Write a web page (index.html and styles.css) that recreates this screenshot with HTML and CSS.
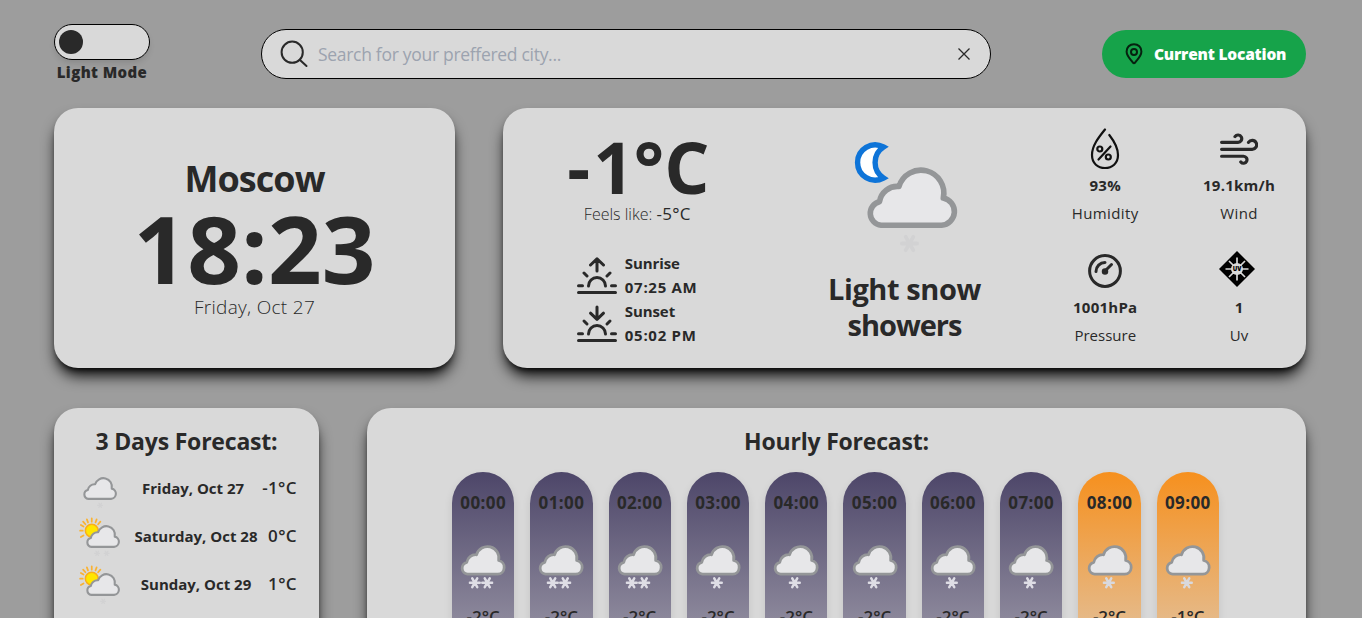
FILE: index.html
```
<!DOCTYPE html>
<html lang="en">
<head>
<meta charset="utf-8">
<title>Weather</title>
<link rel="stylesheet" href="styles.css">
</head>
<body>
<svg class="defs" aria-hidden="true">
  <defs>
    <symbol id="cloud" viewBox="0 0 128 128">
      <path d="M41 98.3A12 12 0 0 1 39.5 74.7A18 18 0 0 1 59 59.5A22.9 22.9 0 0 1 103.3 71A13.8 13.8 0 0 1 101.5 98.3Z" stroke-width="5.6" stroke-linejoin="round"/>
    </symbol>
    <symbol id="flake" viewBox="0 0 20 20">
      <path d="M2 10H18M6 3L14 17M14 3L6 17" fill="none" stroke="currentColor" stroke-width="4" stroke-linecap="round"/>
    </symbol>
    <symbol id="sun" viewBox="0 0 128 128">
      <circle cx="42" cy="55" r="17" fill="#ffe600" stroke="#f9ae1c" stroke-width="4"/>
      <path d="M42 31V22M25 38L19 31M18 55H11M20 68L13 72M59 38L65 31M32 33L29 25M52 33L55 25M20 44L13 40" stroke="#f9b233" stroke-width="4.6" stroke-linecap="round"/>
    </symbol>
    <symbol id="w-two" viewBox="0 0 128 128"><use href="#cloud"/><use href="#flake" x="43" y="103" width="25" height="25"/><use href="#flake" x="68" y="103" width="25" height="25"/></symbol>
    <symbol id="w-one" viewBox="0 0 128 128"><use href="#cloud"/><use href="#flake" x="57" y="103" width="25" height="25"/></symbol>
  </defs>
</svg>
<div class="page">
  <header class="header">
    <div class="mode"><div class="toggle"><span class="knob"></span></div><span class="mode-label">Light Mode</span></div>
    <div class="search">
      <svg class="i-search" viewBox="0 0 32 32"><circle cx="14.200" cy="14.200" r="10.600"/><path d="M21.700 21.700L28.500 28"/></svg>
      <span class="placeholder">Search for your preffered city...</span>
      <svg class="i-close" viewBox="0 0 12 12"><path d="M.5 .5L11.500 11.500M11.500 .5L.5 11.500"/></svg>
    </div>
    <div class="locate">
      <svg class="i-pin" viewBox="0 0 18 22"><path d="M9 1.200C4.700 1.200 1.600 4.400 1.600 8.500C1.600 13.500 6.200 16.800 8 19.700Q9 20.700 10 19.700C11.800 16.800 16.400 13.500 16.400 8.500C16.400 4.400 13.300 1.200 9 1.200Z"/><circle cx="9" cy="9" r="3"/></svg>
      <span>Current Location</span>
    </div>
  </header>

  <div class="row top">
    <section class="card clock">
      <h1 class="city">Moscow</h1>
      <div class="time">18:23</div>
      <div class="date">Friday, Oct 27</div>
    </section>
    <section class="card now">
      <div class="now-col temp-col">
        <div class="temp"><span class="minus">-</span>1°C</div>
        <div class="feels">Feels like: <span class="feels-v">-5°C</span></div>
        <div class="sun-row">
          <svg class="i-sun" viewBox="0 0 40 38"><path d="M1.500 35.500H38.500M1.500 28.800H5.500M34.500 28.800H38.500M7 16L10 19M33 16L30 19M11.500 29A8.500 8.500 0 0 1 28.500 29M20 14V1.800M13.500 8L20 1.800L26.500 8"/></svg>
          <div class="sun-text"><span>Sunrise</span><span class="clock-t">07:25 AM</span></div>
        </div>
        <div class="sun-row">
          <svg class="i-sun" viewBox="0 0 40 38"><path d="M1.500 35.500H38.500M1.500 28.800H5.500M34.500 28.800H38.500M7 16L10 19M33 16L30 19M11.500 29A8.500 8.500 0 0 1 28.500 29M20 2V14M13.500 8.200L20 14.400L26.500 8.200"/></svg>
          <div class="sun-text"><span>Sunset</span><span class="clock-t">05:02 PM</span></div>
        </div>
      </div>
      <div class="now-col cond-col">
        <svg class="cond-icon" viewBox="0 0 128 128">
          <path d="M43.500 20A17.600 17.600 0 1 0 43.500 51A18.500 18.500 0 0 1 43.500 20Z" fill="#fff" stroke="#0e74d8" stroke-width="5.400"/>
          <use href="#cloud"/><use href="#flake" x="60" y="107" width="19" height="19"/>
        </svg>
        <div class="cond">Light snow<br><span class="cond2">showers</span></div>
      </div>
      <div class="stats">
        <div class="stat">
          <svg class="i-hum" viewBox="0 0 30 42"><path d="M15 1.500C9 9 2 17.500 2 27C2 35.500 8 40 15 40C22 40 28 35.500 28 27C28 20 24 13 19.300 7"/><circle cx="9.800" cy="21" r="2.500"/><circle cx="18.300" cy="29" r="2.500"/><path d="M20.500 18.500L8.500 31.500"/></svg>
          <b>93%</b><span class="l-hum">Humidity</span>
        </div>
        <div class="stat">
          <svg class="i-wind" viewBox="0 0 36 30"><path d="M1.500 8.700H17A3.500 3.500 0 1 0 14.200 3.200M1.500 15.300H30.500A4.200 4.200 0 1 0 27 8.800M1.500 21.900H22.300A3.300 3.300 0 1 1 19.700 27.300"/></svg>
          <b>19.1km/h</b><span class="l-wind">Wind</span>
        </div>
        <div class="stat">
          <svg class="i-press" viewBox="0 0 34 34"><circle cx="17" cy="17" r="15.400"/><path d="M8 17.500A9 9 0 0 1 17 8.500M17.500 16.500L23.500 10.500"/><circle cx="17" cy="17.500" r="2.500" class="solid"/></svg>
          <b>1001hPa</b><span>Pressure</span>
        </div>
        <div class="stat">
          <svg class="i-uv" viewBox="0 0 36 36"><path d="M18 0L36 18L18 36L0 18Z" fill="#000"/><g stroke="#d9d9d9" stroke-width="1.700"><path d="M18 6.500V29.500M6.500 18H29.500M10 10L26 26M26 10L10 26"/></g><circle cx="18" cy="18" r="6" fill="#d9d9d9"/><text x="18" y="20.300" class="uv">UV</text></svg>
          <b>1</b><span>Uv</span>
        </div>
      </div>
    </section>
  </div>

  <div class="row bottom">
    <section class="card days">
      <h2 class="title days-title">3 Days Forecast:</h2>
      <div class="day"><svg class="day-icon" viewBox="8 0 128 128"><use href="#cloud" width="128" height="128"/><use href="#flake" x="64" y="107" width="17" height="17"/></svg><span>Friday, Oct 27</span><span class="day-t">-1°C</span></div>
      <div class="day"><svg class="day-icon" viewBox="0 0 128 128"><use href="#sun"/><use href="#cloud"/><use href="#flake" x="48" y="107" width="17" height="17"/><use href="#flake" x="73" y="107" width="17" height="17"/></svg><span>Saturday, Oct 28</span><span class="day-t">0°C</span></div>
      <div class="day"><svg class="day-icon" viewBox="0 0 128 128"><use href="#sun"/><use href="#cloud"/><use href="#flake" x="64" y="107" width="17" height="17"/></svg><span>Sunday, Oct 29</span><span class="day-t">1°C</span></div>
    </section>
    <section class="card hourly">
      <h2 class="title">Hourly Forecast:</h2>
      <div class="hours">
        <div class="hour"><span class="h">00:00</span><svg class="h-icon" viewBox="8 0 128 128"><use href="#w-two" width="128" height="128"/></svg><span class="ht">-2°C</span></div>
        <div class="hour"><span class="h">01:00</span><svg class="h-icon" viewBox="8 0 128 128"><use href="#w-two" width="128" height="128"/></svg><span class="ht">-2°C</span></div>
        <div class="hour"><span class="h">02:00</span><svg class="h-icon" viewBox="8 0 128 128"><use href="#w-two" width="128" height="128"/></svg><span class="ht">-2°C</span></div>
        <div class="hour"><span class="h">03:00</span><svg class="h-icon" viewBox="8 0 128 128"><use href="#w-one" width="128" height="128"/></svg><span class="ht">-2°C</span></div>
        <div class="hour"><span class="h">04:00</span><svg class="h-icon" viewBox="8 0 128 128"><use href="#w-one" width="128" height="128"/></svg><span class="ht">-2°C</span></div>
        <div class="hour"><span class="h">05:00</span><svg class="h-icon" viewBox="8 0 128 128"><use href="#w-one" width="128" height="128"/></svg><span class="ht">-2°C</span></div>
        <div class="hour"><span class="h">06:00</span><svg class="h-icon" viewBox="8 0 128 128"><use href="#w-one" width="128" height="128"/></svg><span class="ht">-2°C</span></div>
        <div class="hour"><span class="h">07:00</span><svg class="h-icon" viewBox="8 0 128 128"><use href="#w-one" width="128" height="128"/></svg><span class="ht">-2°C</span></div>
        <div class="hour dawn"><span class="h">08:00</span><svg class="h-icon" viewBox="8 0 128 128"><use href="#w-one" width="128" height="128"/></svg><span class="ht">-2°C</span></div>
        <div class="hour dawn"><span class="h">09:00</span><svg class="h-icon" viewBox="8 0 128 128"><use href="#w-one" width="128" height="128"/></svg><span class="ht">-1°C</span></div>
      </div>
    </section>
  </div>
</div>
</body>
</html>
```
FILE: styles.css
```
* { box-sizing: border-box; margin: 0; padding: 0; }
html, body { height: 618px; overflow: hidden; }
body { background: #9d9d9d; color: #292929; font-family: "Open Sans", "Noto Sans", sans-serif; font-size: 16px; line-height: 24px; }
svg { display: block; flex: none; fill: none; stroke: #292929; }
span, b, h1, h2, .temp, .time, .date, .feels { white-space: nowrap; }
.defs { position: absolute; width: 0; height: 0; }
.page { padding: 24px 56px 0 54px; height: 618px; overflow: hidden; }

.header { display: flex; justify-content: space-between; height: 84px; }
.mode { width: 96px; display: flex; flex-direction: column; align-items: center; }
.toggle { width: 96px; height: 36px; border: 1px solid #000; border-radius: 18px; background: #d9d9d9; padding: 5px 4px; box-shadow: 0 4px 6px -1px rgba(0,0,0,.12); }
.knob { display: block; width: 24px; height: 24px; border-radius: 50%; background: #292929; }
.mode-label { font-weight: 800; font-size: 15px; line-height: 24px; letter-spacing: .4px; }
.search { width: 730px; height: 50px; margin-top: 5px; border: 1px solid #000; border-radius: 25px; background: #d9d9d9; display: flex; align-items: center; padding: 0 20px 0 16px; }
.i-search { width: 32px; height: 32px; stroke-width: 2; stroke-linecap: round; }
.placeholder { flex: 1; margin-left: 8px; color: #9ca3af; font-size: 17.5px; letter-spacing: -.3px; }
.i-close { width: 12px; height: 12px; stroke-width: 1.3; overflow: visible; }
.locate { width: 204px; height: 48px; margin-top: 6px; border-radius: 24px; background: #16a34a; color: #fff; font-weight: 800; font-size: 15.5px; letter-spacing: -.2px; display: flex; align-items: center; padding-left: 23px; gap: 11px; }
.i-pin { width: 18px; height: 22px; stroke: #06210f; stroke-width: 2; }

.row { display: flex; gap: 48px; }
.top { height: 260px; margin-bottom: 40px; }
.card { background: #d9d9d9; border-radius: 24px; box-shadow: 0 10px 15px -3px #000, 0 4px 6px -4px #000; }
.clock { width: 401px; padding-top: 51px; display: flex; flex-direction: column; align-items: center; }
.city { font-size: 36px; line-height: 40px; font-weight: 700; letter-spacing: -.95px; }
.time { font-size: 94px; line-height: 96px; font-weight: 700; padding-top: 1px; }
.date { font-size: 19px; line-height: 24px; font-weight: 300; letter-spacing: .3px; margin-top: -1px; }
.now { width: 803px; display: grid; grid-template-columns: repeat(3, 1fr); }
.now-col { display: flex; flex-direction: column; align-items: center; }
.temp-col { padding-top: 23px; }
.temp { font-size: 71px; line-height: 72px; font-weight: 700; padding-left: 3px; }
.minus { letter-spacing: 3px; }
.feels { font-size: 16px; line-height: 24px; font-weight: 300; margin: -1px 0 25px 1px; }
.feels-v { font-size: 17px; font-weight: 400; letter-spacing: .3px; }
.sun-row { display: flex; gap: 8px; width: 120px; height: 48px; align-items: center; }
.i-sun { width: 40px; height: 38px; stroke-width: 3; stroke-linecap: round; stroke-linejoin: round; margin-top: 1px; }
.sun-text { display: flex; flex-direction: column; font-weight: 700; font-size: 15px; }
.sun-text span { letter-spacing: -.1px; }
.sun-text .clock-t { letter-spacing: .7px; }
.cond-col { padding-top: 19px; }
.cond-icon { width: 128px; height: 128px; color: #d2d2d3; }
#cloud path { fill: #e7e7e9; stroke: #949698; }
#flake path { stroke: currentColor; }
.cond { font-size: 29px; line-height: 36px; font-weight: 700; text-align: center; margin-top: 16px; letter-spacing: -.4px; }
.cond2 { letter-spacing: -1px; }
.stats { display: grid; grid-template-columns: 1fr 1fr; grid-template-rows: 122px 122px; padding-top: 20px; }
.stat { display: flex; flex-direction: column; align-items: center; font-size: 15px; line-height: 28px; }
.stat svg { height: 42px; margin-bottom: 1px; }
.stat b { font-weight: 700; letter-spacing: .25px; }
.l-hum, .l-wind { letter-spacing: .4px; }
.i-hum { width: 30px; stroke: #111; stroke-width: 2.2; stroke-linecap: round; }
.stat .i-wind { width: 38px; height: 32px; margin: 5px 0 6px; stroke-width: 3; stroke-linecap: round; }
.stat .i-press { width: 34px; height: 34px; margin: 4px 0 5px; stroke-width: 3; stroke-linecap: round; }
.solid { fill: #292929; stroke-width: 1.5; }
.stat .i-uv { width: 36px; height: 36px; margin: 1px 4px 6px 0; stroke: none; }
.uv { font: 800 6px "Open Sans", sans-serif; fill: #000; text-anchor: middle; }

.bottom { height: 300px; }
.title { font-size: 23px; line-height: 32px; font-weight: 700; text-align: center; letter-spacing: -.2px; }
.days { width: 265px; padding-top: 17px; }
.day { height: 48px; padding: 0 22px; display: flex; justify-content: space-between; align-items: center; font-weight: 700; font-size: 15px; letter-spacing: 0; }
.days-title { margin-bottom: 7px; }
.day-icon { width: 48px; height: 48px; margin-top: -5px; color: #d2d2d3; }
.day-t { font-size: 17px; font-weight: 600; letter-spacing: .4px; }
.hourly { width: 939px; padding-top: 17px; }
.hours { display: flex; gap: 16px; margin: 15px 0 0 85px; width: 767px; }
.hour { flex: 1; min-width: 0; height: 264px; border-radius: 32px; padding-top: 17px; display: flex; flex-direction: column; align-items: center; background: linear-gradient(#4d4669, #bdbbc2); box-shadow: 0 4px 8px rgba(0,0,0,.1); }
.hour.dawn { background: linear-gradient(#f6901e, #d9d9d9); }
.h { font-size: 17px; line-height: 28px; font-weight: 700; letter-spacing: .4px; }
.h-icon { width: 64px; height: 64px; margin: 8px 0 14px; color: #dedde5; }
.dawn .h-icon { color: #d9d9dd; }
.ht { font-size: 17px; line-height: 28px; font-weight: 600; }
```
